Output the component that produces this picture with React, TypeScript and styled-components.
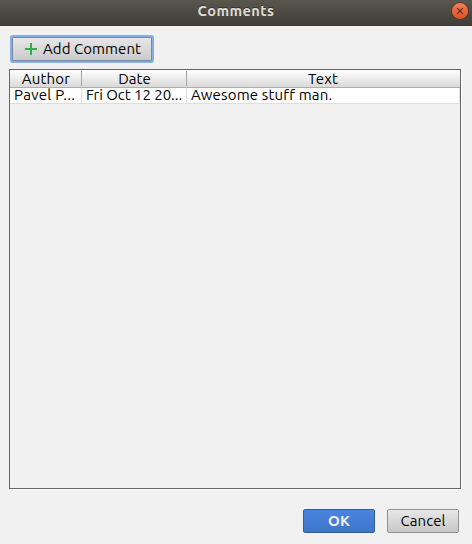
import React from "react";
import styled, { createGlobalStyle } from "styled-components";

const GlobalStyle = createGlobalStyle`
  * { box-sizing: border-box; }
  html, body { margin: 0; padding: 0; overflow: hidden; background: #f1f1f1; }
  button { font: inherit; margin: 0; }
`;

const Dialog = styled.div`
  display: flex;
  flex-direction: column;
  width: 472px;
  height: 544px;
  background: #f1f1f1;
  color: #000;
  font: 15px/18px Ubuntu, "Noto Sans", sans-serif;
`;

const TitleBar = styled.header`
  display: grid;
  grid-template-columns: 24px 1fr 24px;
  align-items: center;
  height: 26px;
  padding-bottom: 4px;
  background: linear-gradient(#59564e, #3f3e39);
  border-bottom: 1px solid #3b3a36;
`;

const Title = styled.h1`
  grid-column: 2;
  margin: 0;
  color: #dfdbd2;
  font-size: 14.67px;
  font-weight: 700;
  line-height: 20px;
  text-align: center;
  letter-spacing: 0.4px;
  text-shadow: 0 -1px 0 #34332f;
`;

const CloseButton = styled.button`
  display: grid;
  place-items: center;
  width: 18px;
  height: 18px;
  margin: 1px 0 0 3px;
  padding: 0;
  border: 1px solid #4d3a31;
  border-radius: 50%;
  background: linear-gradient(#f37d5a, #e5501f);
`;

const Toolbar = styled.div`
  display: flex;
  padding: 9px 10px 6px;
`;

const AddButton = styled.button`
  display: flex;
  align-items: center;
  width: 144px;
  height: 28px;
  padding: 0 0 1px 12px;
  border: 2px solid #86aee6;
  border-radius: 3px;
  background: linear-gradient(#e8e8e8, #c9c9c9);
  box-shadow: inset 0 0 0 1px #7886a0;
  white-space: nowrap;
`;

const PlusIcon = styled.svg`
  flex: none;
  width: 14px;
  height: 14px;
  margin: 1px 5px 0 0;
`;

const Label = styled.span<{ $spacing?: number }>`
  letter-spacing: ${(p) => p.$spacing ?? 0}px;
  white-space: nowrap;
`;

const TableFrame = styled.section`
  width: 452px;
  height: 420px;
  margin-left: 9px;
  border: 1px solid #656565;
  box-shadow: 1px 1px 0 #fff;
`;

const Row = styled.div`
  display: grid;
  grid-template-columns: 72px 105px 1fr;
`;

const HeaderRow = styled(Row)`
  height: 18px;
  background: linear-gradient(#fff, #d9d9d9);
  border-bottom: 1px solid #adadad;
`;

const HeaderCell = styled.div`
  display: flex;
  justify-content: center;
  height: 15px;
  margin-top: 1px;
  padding-left: 1px;
  line-height: 16px;
  &:not(:last-child) { border-right: 1px solid #a2a2a2; }
  &:last-child { padding-left: 0; padding-right: 1px; }
`;

const BodyRow = styled(Row)`
  height: 16px;
  background: #fff;
  border-bottom: 1px solid #dedede;
`;

const Cell = styled.div`
  height: 15px;
  padding-left: 4px;
  line-height: 14px;
  border-right: 1px solid #dedede;
`;

const Actions = styled.footer`
  display: flex;
  justify-content: flex-end;
  gap: 12px;
  padding: 20px 13px 0 0;
`;

const ActionButton = styled.button<{ $primary?: boolean }>`
  width: 72px;
  height: 24px;
  padding: 0;
  border: 1px solid ${(p) => (p.$primary ? "#2d6099" : "#929292")};
  border-radius: 2px;
  background: ${(p) => (p.$primary ? "linear-gradient(#4a84df, #3d76ca)" : "linear-gradient(#e7e7e7, #c8c8c8)")};
  color: ${(p) => (p.$primary ? "#f1f1f1" : "#000")};
  font-weight: ${(p) => (p.$primary ? 700 : 400)};
  line-height: 22px;
`;

export default function App() {
  return (
    <>
      <GlobalStyle />
      <Dialog role="dialog" aria-label="Comments">
        <TitleBar>
          <Title>Comments</Title>
          <CloseButton aria-label="Close">
            <svg width="8" height="8" viewBox="0 0 8 8">
              <path d="M1.2 1.2 6.8 6.8M6.8 1.2 1.2 6.8" stroke="#49311f" strokeWidth="1.2" />
            </svg>
          </CloseButton>
        </TitleBar>
        <Toolbar>
          <AddButton>
            <PlusIcon viewBox="0 0 14 14">
              <path d="M7 1v12M1 7h12" stroke="#2fab50" strokeWidth="2" />
            </PlusIcon>
            <Label $spacing={0.06}>Add Comment</Label>
          </AddButton>
        </Toolbar>
        <TableFrame>
          <HeaderRow>
            <HeaderCell><Label $spacing={0.2}>Author</Label></HeaderCell>
            <HeaderCell><Label>Date</Label></HeaderCell>
            <HeaderCell><Label $spacing={0.2}>Text</Label></HeaderCell>
          </HeaderRow>
          <BodyRow>
            <Cell><Label $spacing={0.3}>Pavel P...</Label></Cell>
            <Cell><Label $spacing={-0.04}>Fri Oct 12 20...</Label></Cell>
            <Cell><Label $spacing={0.17}>Awesome stuff man.</Label></Cell>
          </BodyRow>
        </TableFrame>
        <Actions>
          <ActionButton $primary><Label>OK</Label></ActionButton>
          <ActionButton><Label $spacing={0.1}>Cancel</Label></ActionButton>
        </Actions>
      </Dialog>
    </>
  );
}
